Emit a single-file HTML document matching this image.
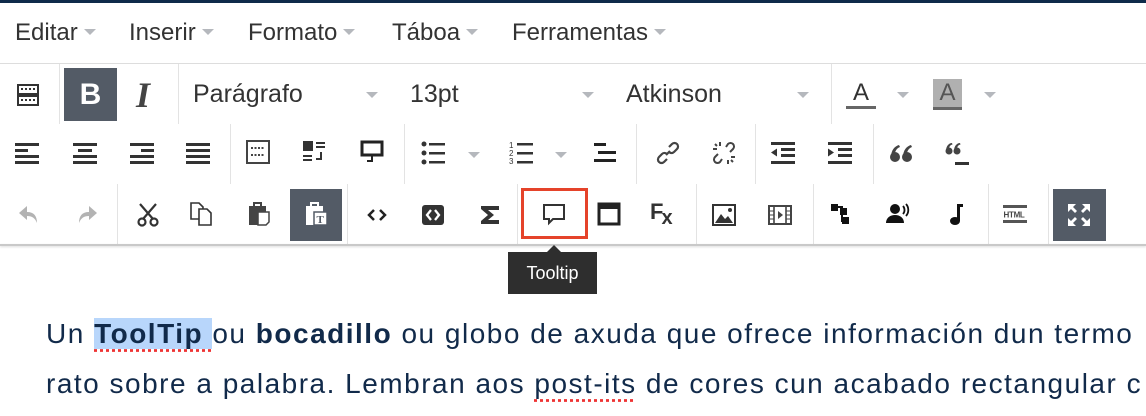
<!DOCTYPE html>
<html><head><meta charset="utf-8"><style>
*{margin:0;padding:0;box-sizing:border-box}
body{width:1146px;height:416px;overflow:hidden;background:#fff;font-family:"Liberation Sans",sans-serif;position:relative}
.a{position:absolute}
.top{left:0;top:0;width:1146px;height:3px;background:#0f2a4a}
.menu{top:19px;font-size:24px;color:#333;white-space:nowrap}
.car{display:inline-block;width:0;height:0;border-left:6px solid transparent;border-right:6px solid transparent;border-top:6px solid #b5b8bd;vertical-align:middle;margin-left:6px;position:relative;top:-2px}
.hl{left:0;width:1146px;height:1px;background:#ddd}
.sep{width:1px;background:#e3e3e3}
.ic{position:absolute;width:24px;height:24px}
.ic svg{width:24px;height:24px;display:block}
.sel{font-size:25px;color:#333;top:80px}
.arr{position:absolute;border-left:6px solid transparent;border-right:6px solid transparent;border-top:6px solid #b5b8bd;width:0;height:0}
.txt{left:46px;font-size:28px;color:#112a4a;white-space:nowrap;letter-spacing:1.5px}
</style></head><body>
<div class="a top"></div>
<div class="a menu" style="left:15px">Editar<span class="car"></span></div>
<div class="a menu" style="left:129px">Inserir<span class="car"></span></div>
<div class="a menu" style="left:248px">Formato<span class="car"></span></div>
<div class="a menu" style="left:392px">Táboa<span class="car"></span></div>
<div class="a menu" style="left:512px">Ferramentas<span class="car"></span></div>
<div class="a hl" style="top:63px"></div>

<div class="a sep" style="left:59px;top:64px;height:60px"></div>
<div class="a sep" style="left:178px;top:64px;height:60px"></div>
<div class="a sep" style="left:831px;top:64px;height:60px"></div>
<div class="a sep" style="left:230px;top:124px;height:60px"></div>
<div class="a sep" style="left:404px;top:124px;height:60px"></div>
<div class="a sep" style="left:636px;top:124px;height:60px"></div>
<div class="a sep" style="left:755px;top:124px;height:60px"></div>
<div class="a sep" style="left:873px;top:124px;height:60px"></div>
<div class="a sep" style="left:117px;top:184px;height:60px"></div>
<div class="a sep" style="left:347px;top:184px;height:60px"></div>
<div class="a sep" style="left:517px;top:184px;height:60px"></div>
<div class="a sep" style="left:696px;top:184px;height:60px"></div>
<div class="a sep" style="left:813px;top:184px;height:60px"></div>
<div class="a sep" style="left:988px;top:184px;height:60px"></div>
<div class="a sep" style="left:1048px;top:184px;height:60px"></div>
<div class="a" style="left:0;top:244px;width:1146px;height:2px;background:#c9c9c9;box-shadow:0 1px 2px rgba(0,0,0,.15)"></div>

<!-- row1 -->
<div class="ic" style="left:16px;top:83px"><svg viewBox="0 0 24 24"><rect x="2" y="2" width="20" height="9" fill="none" stroke="#333" stroke-width="2"/><rect x="2" y="13" width="20" height="9" fill="none" stroke="#333" stroke-width="2"/><path d="M5 6h2M9 6h2M13 6h2M17 6h2M5 17h2M9 17h2M13 17h2M17 17h2" stroke="#333" stroke-width="2"/></svg></div>
<div class="a" style="left:64px;top:68px;width:53px;height:53px;background:#535b66;color:#fff;font-weight:bold;font-size:30px;text-align:center;line-height:53px">B</div>
<div class="a" style="left:136px;top:74px;font-family:'Liberation Serif',serif;font-style:italic;font-weight:bold;font-size:36px;color:#444">I</div>
<div class="a sel" style="left:193px">Parágrafo</div><div class="arr" style="left:366px;top:92px"></div>
<div class="a sel" style="left:410px">13pt</div><div class="arr" style="left:582px;top:92px"></div>
<div class="a sel" style="left:626px">Atkinson</div><div class="arr" style="left:797px;top:92px"></div>
<div class="a" style="left:846px;top:80px;font-size:24px;color:#333;width:30px;text-align:center;border-bottom:3px solid #666;line-height:26px">A</div>
<div class="arr" style="left:897px;top:92px"></div>
<div class="a" style="left:933px;top:79px;font-size:24px;color:#555;width:29px;text-align:center;background:#b0b0b0;border-bottom:3px solid #666;line-height:28px">A</div>
<div class="arr" style="left:984px;top:92px"></div>

<!-- row2 -->
<div class="ic" style="left:15px;top:141px"><svg viewBox="0 0 24 24" fill="#333"><rect x="0" y="2" width="24" height="3"/><rect x="0" y="8" width="13" height="3"/><rect x="0" y="14" width="24" height="3"/><rect x="0" y="20" width="24" height="3"/></svg></div>
<div class="ic" style="left:73px;top:141px"><svg viewBox="0 0 24 24" fill="#333"><rect x="0" y="2" width="24" height="3"/><rect x="5" y="8" width="14" height="3"/><rect x="0" y="14" width="24" height="3"/><rect x="0" y="20" width="24" height="3"/></svg></div>
<div class="ic" style="left:130px;top:141px"><svg viewBox="0 0 24 24" fill="#333"><rect x="0" y="2" width="24" height="3"/><rect x="11" y="8" width="13" height="3"/><rect x="0" y="14" width="24" height="3"/><rect x="0" y="20" width="24" height="3"/></svg></div>
<div class="ic" style="left:186px;top:141px"><svg viewBox="0 0 24 24" fill="#333"><rect x="0" y="2" width="24" height="3"/><rect x="0" y="8" width="24" height="3"/><rect x="0" y="14" width="24" height="3"/><rect x="0" y="20" width="24" height="3"/></svg></div>
<div class="ic" style="left:246px;top:140px"><svg viewBox="0 0 24 24"><rect x="1" y="1" width="22" height="22" fill="none" stroke="#444" stroke-width="2"/><path d="M5 8h14M5 15h14" stroke="#444" stroke-width="2" stroke-dasharray="2 1.5"/></svg></div>
<div class="ic" style="left:302px;top:140px"><svg viewBox="0 0 24 24" fill="#333"><rect x="1" y="1" width="10" height="10"/><rect x="14" y="2" width="9" height="2"/><rect x="14" y="6" width="9" height="2"/><rect x="1" y="15" width="9" height="2"/><rect x="1" y="19" width="9" height="2"/><path d="M19 12v7h-5" stroke="#333" stroke-width="2" fill="none"/></svg></div>
<div class="ic" style="left:360px;top:140px"><svg viewBox="0 0 24 24"><rect x="2" y="2" width="20" height="13" fill="none" stroke="#222" stroke-width="3"/><path d="M12 15v6h-5" stroke="#222" stroke-width="2" fill="none"/></svg></div>
<div class="ic" style="left:421px;top:141px"><svg viewBox="0 0 24 24" fill="#333"><circle cx="3" cy="3" r="2.5"/><circle cx="3" cy="12" r="2.5"/><circle cx="3" cy="21" r="2.5"/><rect x="8" y="2" width="16" height="2.5"/><rect x="8" y="11" width="16" height="2.5"/><rect x="8" y="20" width="16" height="2.5"/></svg></div>
<div class="arr" style="left:468px;top:152px"></div>
<div class="ic" style="left:509px;top:141px"><svg viewBox="0 0 24 24" fill="#333"><text x="0" y="7" font-size="8" font-family="Liberation Sans">1</text><text x="0" y="15" font-size="8" font-family="Liberation Sans">2</text><text x="0" y="23" font-size="8" font-family="Liberation Sans">3</text><rect x="8" y="2" width="16" height="2.5"/><rect x="8" y="11" width="16" height="2.5"/><rect x="8" y="20" width="16" height="2.5"/></svg></div>
<div class="arr" style="left:555px;top:152px"></div>
<div class="ic" style="left:592px;top:141px"><svg viewBox="0 0 24 24" fill="#222"><rect x="2" y="2" width="12" height="3"/><rect x="6" y="10" width="18" height="3"/><rect x="2" y="18" width="22" height="3"/></svg></div>
<div class="ic" style="left:656px;top:141px"><svg viewBox="0 0 24 24" fill="none" stroke="#444" stroke-width="2.2"><path d="M10 14l4-4"/><path d="M13 6l3-3a3.5 3.5 0 0 1 5 5l-3 3a3.5 3.5 0 0 1-5 0"/><path d="M11 18l-3 3a3.5 3.5 0 0 1-5-5l3-3a3.5 3.5 0 0 1 5 0"/></svg></div>
<div class="ic" style="left:712px;top:141px"><svg viewBox="0 0 24 24" fill="none" stroke="#444" stroke-width="2"><path d="M14 6l2-3a3.5 3.5 0 0 1 5 5l-3 3"/><path d="M10 18l-2 3a3.5 3.5 0 0 1-5-5l3-3"/><path d="M8 1v4M1 8h4M16 23v-4M23 16h-4M3 3l2 2M21 21l-2-2"/></svg></div>
<div class="ic" style="left:771px;top:141px"><svg viewBox="0 0 24 24" fill="#333"><rect x="0" y="1" width="24" height="3"/><rect x="10" y="7" width="14" height="3"/><rect x="10" y="13" width="14" height="3"/><rect x="0" y="20" width="24" height="3"/><path d="M0 11.5l6-4v8z"/></svg></div>
<div class="ic" style="left:828px;top:141px"><svg viewBox="0 0 24 24" fill="#333"><rect x="0" y="1" width="24" height="3"/><rect x="10" y="7" width="14" height="3"/><rect x="10" y="13" width="14" height="3"/><rect x="0" y="20" width="24" height="3"/><path d="M6 11.5l-6-4v8z"/></svg></div>
<div class="ic" style="left:889px;top:142px"><svg viewBox="0 0 24 24" fill="#444"><circle cx="6" cy="15" r="5"/><path d="M2 15c0-7 4-11 8-12l1 2c-3 1-5 4-5 7z"/><circle cx="18" cy="15" r="5"/><path d="M14 15c0-7 4-11 8-12l1 2c-3 1-5 4-5 7z"/></svg></div>
<div class="ic" style="left:945px;top:142px"><svg viewBox="0 0 24 24" fill="#444"><circle cx="4" cy="9" r="3.5"/><path d="M1 9c0-5 3-8 6-8l.5 1.5C5 3 4 5 4 7z"/><circle cx="12" cy="9" r="3.5"/><path d="M9 9c0-5 3-8 6-8l.5 1.5C13 3 12 5 12 7z"/><rect x="10" y="20" width="14" height="3" fill="#333"/></svg></div>

<!-- row3 -->
<div class="ic" style="left:17px;top:203px"><svg viewBox="0 0 24 24"><path d="M10 3L2 10l8 7v-4c5 0 8 2 10 7 0-7-3-11-10-11z" fill="#b3b3b3"/></svg></div>
<div class="ic" style="left:75px;top:203px"><svg viewBox="0 0 24 24"><path d="M14 3l8 7-8 7v-4c-5 0-8 2-10 7 0-7 3-11 10-11z" fill="#b3b3b3"/></svg></div>
<div class="ic" style="left:136px;top:203px"><svg viewBox="0 0 24 24" fill="none" stroke="#333" stroke-width="2.2"><path d="M4 1l13 15M20 1L7 16"/><circle cx="6" cy="19" r="3.5"/><circle cx="18" cy="19" r="3.5"/></svg></div>
<div class="ic" style="left:189px;top:202px"><svg viewBox="0 0 24 24" fill="#fff" stroke="#333" stroke-width="1.6"><path d="M2 1h8l4 4v12H2z"/><path d="M10 7h8l4 4v12H10z"/></svg></div>
<div class="ic" style="left:247px;top:202px"><svg viewBox="0 0 24 24"><rect x="2" y="4" width="17" height="19" fill="#444"/><rect x="7" y="1" width="7" height="5" fill="none" stroke="#444" stroke-width="2"/><path d="M11 10h11v10l-3 3h-8z" fill="#fff" stroke="#444" stroke-width="1.5"/></svg></div>
<div class="a" style="left:290px;top:189px;width:52px;height:52px;background:#535b66"></div>
<div class="ic" style="left:304px;top:202px"><svg viewBox="0 0 24 24"><rect x="2" y="4" width="17" height="19" fill="#fff"/><rect x="7" y="1" width="7" height="5" fill="none" stroke="#fff" stroke-width="2"/><rect x="10" y="10" width="13" height="13" fill="#fff" stroke="#535b66" stroke-width="1.5"/><text x="12.5" y="21" font-size="11" font-weight="bold" font-family="Liberation Serif" fill="#535b66">T</text></svg></div>
<div class="ic" style="left:365px;top:203px"><svg viewBox="0 0 24 24" fill="none" stroke="#222" stroke-width="2.5"><path d="M9 7l-5 5 5 5M15 7l5 5-5 5"/></svg></div>
<div class="ic" style="left:421px;top:203px"><svg viewBox="0 0 24 24"><rect x="1" y="2" width="22" height="20" rx="3" fill="#333"/><path d="M10 7l-4 5 4 5M14 7l4 5-4 5" stroke="#fff" stroke-width="2.3" fill="none"/></svg></div>
<div class="ic" style="left:478px;top:203px"><svg viewBox="0 0 24 24"><path d="M3 3h18v4H10l6 5-6 5h11v4H3v-3l7-6-7-6z" fill="#333"/></svg></div>
<div class="a" style="left:521px;top:188px;width:67px;height:51px;border:3px solid #e5432a"></div>
<div class="ic" style="left:542px;top:202px"><svg viewBox="0 0 24 24" fill="none" stroke="#333" stroke-width="2"><path d="M2 3h20v14H11l-4 4v-4H2z"/></svg></div>
<div class="ic" style="left:597px;top:202px"><svg viewBox="0 0 24 24"><rect x="2" y="2" width="20" height="20" fill="none" stroke="#222" stroke-width="3"/><rect x="2" y="2" width="20" height="5" fill="#222"/></svg></div>
<div class="a" style="left:650px;top:199px;font-weight:bold;font-size:22px;color:#333;letter-spacing:-2px">F<span style="font-size:20px;position:relative;top:5px">x</span></div>
<div class="ic" style="left:712px;top:203px"><svg viewBox="0 0 24 24"><rect x="1" y="2" width="22" height="20" fill="none" stroke="#333" stroke-width="2"/><path d="M3 20l6-9 4 5 3-3 5 7z" fill="#333"/><circle cx="18" cy="7" r="2" fill="#333"/></svg></div>
<div class="ic" style="left:768px;top:203px"><svg viewBox="0 0 24 24"><rect x="1" y="3" width="22" height="18" fill="none" stroke="#444" stroke-width="2"/><path d="M6 3v18M18 3v18" stroke="#444" stroke-width="1.6"/><path d="M2 8h4M2 12h4M2 16h4M18 8h4M18 12h4M18 16h4" stroke="#444"/><path d="M10 8l5 4-5 4z" fill="#444"/></svg></div>
<div class="ic" style="left:830px;top:202px"><svg viewBox="0 0 24 24" fill="#111"><rect x="1" y="2" width="7" height="7"/><rect x="10" y="6" width="7" height="7"/><rect x="12" y="15" width="7" height="7"/><path d="M8 5h4v14h2" stroke="#111" stroke-width="2" fill="none"/></svg></div>
<div class="ic" style="left:886px;top:202px"><svg viewBox="0 0 24 24" fill="#111"><circle cx="9" cy="7" r="5"/><path d="M0 21c0-5 4-8 9-8s9 3 9 8z"/><path d="M17 4a6 6 0 0 1 0 8M20 2a9 9 0 0 1 0 12" stroke="#111" stroke-width="1.8" fill="none"/></svg></div>
<div class="ic" style="left:945px;top:202px"><svg viewBox="0 0 24 24" fill="#111"><rect x="12" y="2" width="3" height="17"/><rect x="12" y="2" width="6" height="3"/><ellipse cx="10" cy="19" rx="5" ry="4"/></svg></div>
<div class="ic" style="left:1003px;top:202px"><svg viewBox="0 0 24 24"><rect x="0" y="3" width="24" height="3" fill="#555"/><rect x="0" y="18" width="24" height="3" fill="#555"/><text x="0.5" y="15.5" font-size="8" font-weight="bold" font-family="Liberation Sans" fill="#444" letter-spacing="-0.3">HTML</text></svg></div>
<div class="a" style="left:1053px;top:189px;width:53px;height:52px;background:#535b66"></div>
<div class="ic" style="left:1067px;top:203px"><svg viewBox="0 0 24 24" fill="#fff"><path d="M1 1h8l-3 3 4 4-2 2-4-4-3 3zM23 1v8l-3-3-4 4-2-2 4-4-3-3zM1 23v-8l3 3 4-4 2 2-4 4 3 3zM23 23h-8l3-3-4-4 2-2 4 4 3-3z"/></svg></div>

<!-- tooltip -->
<div class="a" style="left:547px;top:245px;width:0;height:0;border-left:7px solid transparent;border-right:7px solid transparent;border-bottom:7px solid #2e2e2e"></div>
<div class="a" style="left:508px;top:252px;width:89px;height:42px;background:#2e2e2e;color:#fff;font-size:18px;text-align:center;line-height:42px">Tooltip</div>

<!-- content -->
<div class="a txt" style="top:318px">Un <span style="background:#b8d6fb;font-weight:bold;text-decoration:underline dotted #e33;text-underline-offset:6px">ToolTip </span>ou <b>bocadillo</b> ou globo de axuda que ofrece información dun termo</div>
<div class="a txt" style="top:368px">rato sobre a palabra. Lembran aos <span style="text-decoration:underline dotted #e33;text-underline-offset:6px">post-its</span> de cores cun acabado rectangular c</div>
</body></html>
